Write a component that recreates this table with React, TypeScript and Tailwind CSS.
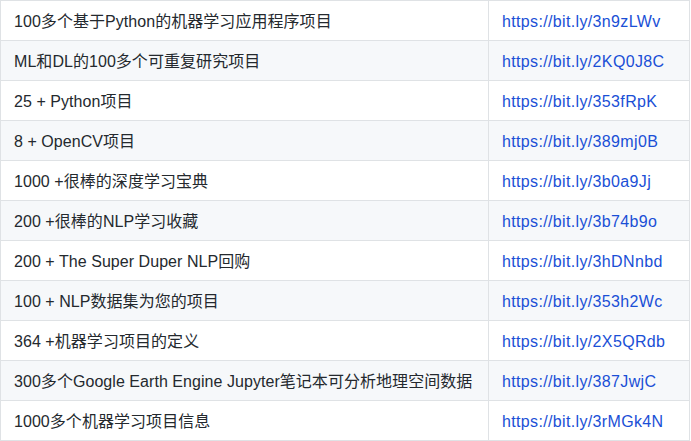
const rows: [string, string][] = [
  ["100多个基于Python的机器学习应用程序项目", "https://bit.ly/3n9zLWv"],
  ["ML和DL的100多个可重复研究项目", "https://bit.ly/2KQ0J8C"],
  ["25 + Python项目", "https://bit.ly/353fRpK"],
  ["8 + OpenCV项目", "https://bit.ly/389mj0B"],
  ["1000 +很棒的深度学习宝典", "https://bit.ly/3b0a9Jj"],
  ["200 +很棒的NLP学习收藏", "https://bit.ly/3b74b9o"],
  ["200 + The Super Duper NLP回购", "https://bit.ly/3hDNnbd"],
  ["100 + NLP数据集为您的项目", "https://bit.ly/353h2Wc"],
  ["364 +机器学习项目的定义", "https://bit.ly/2X5QRdb"],
  ["300多个Google Earth Engine Jupyter笔记本可分析地理空间数据", "https://bit.ly/387JwjC"],
  ["1000多个机器学习项目信息", "https://bit.ly/3rMGk4N"],
];

export default function App() {
  return (
    <div className="bg-white w-[691px] h-[441px] overflow-hidden">
      <table
        className="w-[690px] border-collapse text-[16px] text-[#24292e]"
        style={{ fontFamily: '"Liberation Sans", "Noto Sans CJK SC", sans-serif' }}
      >
        <tbody>
          {rows.map(([title, url], i) => (
            <tr
              key={url}
              className={`h-10 border-t border-[#dfe2e5] ${i % 2 === 1 ? "bg-[#f6f8fa]" : "bg-white"}`}
            >
              <td className="w-[488px] border border-[#dfe2e5] pl-[13px] pr-2 pt-[3px] pb-0 leading-6 whitespace-nowrap tracking-[0.05px]">
                {title}
              </td>
              <td className="border border-[#dfe2e5] px-[13px] pt-[3px] pb-0 leading-6">
                <a href={url} className="text-[#1a4fd6] no-underline tracking-[0.35px]">
                  {url}
                </a>
              </td>
            </tr>
          ))}
        </tbody>
      </table>
    </div>
  );
}
